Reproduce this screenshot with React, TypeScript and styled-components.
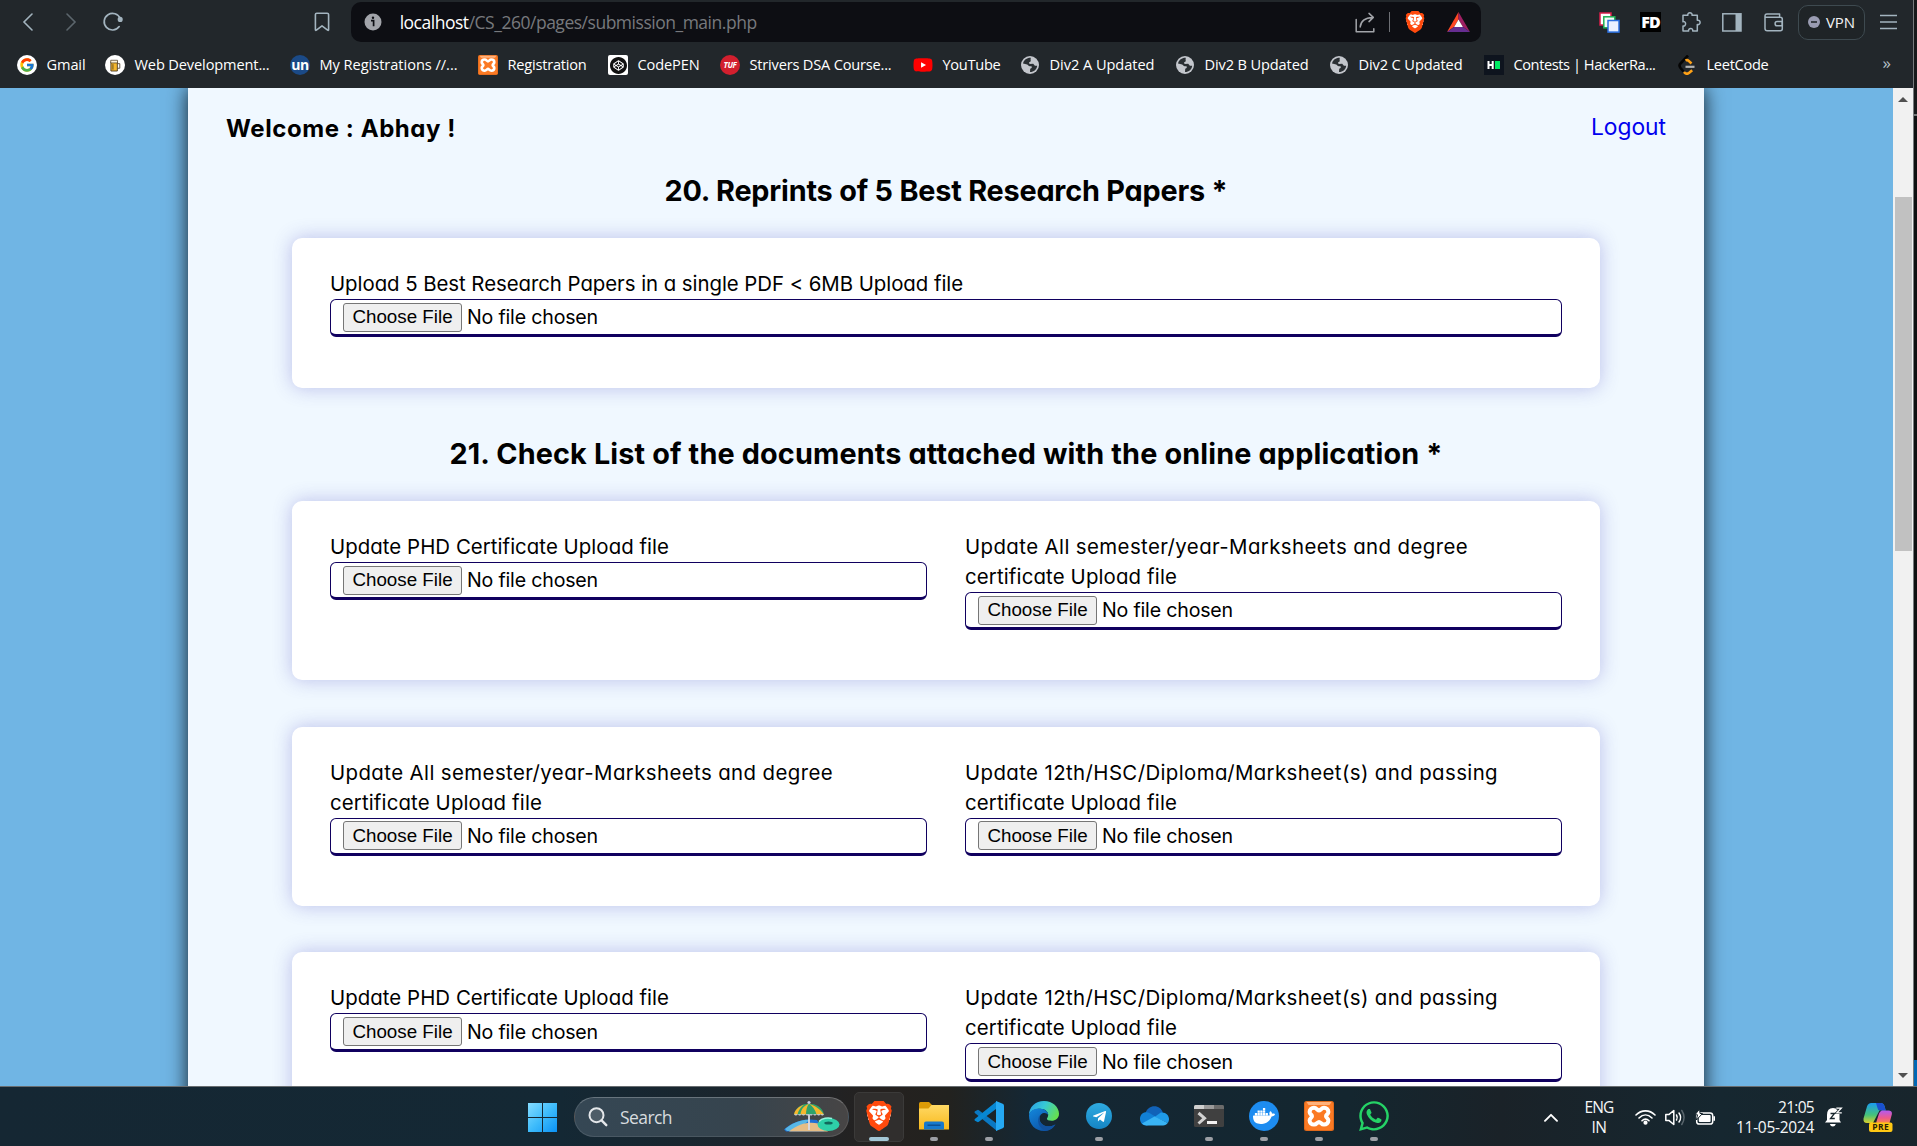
import React, { useLayoutEffect, useRef, useState } from "react";
import styled, { createGlobalStyle } from "styled-components";
import { FcGoogle } from "react-icons/fc";
import { FaYoutube, FaWhatsapp, FaTelegramPlane } from "react-icons/fa";
import { SiBrave, SiCodepen, SiDocker } from "react-icons/si";

const GlobalStyle = createGlobalStyle`
  *, *::before, *::after { box-sizing: border-box; }
  html, body { margin: 0; padding: 0; overflow: hidden; }
  body { font-family: "Open Sans", "Noto Sans", sans-serif; }
  svg { display: block; flex: none; }
`;

/* ---------- text with a fixed measure ---------- */

const FitSpan = styled.span<{ $block?: boolean }>`
  display: ${(p) => (p.$block ? "block" : "inline-block")};
  width: max-content;
  white-space: nowrap;
`;

function Fit({ width, block, children }: { width: number; block?: boolean; children: string }) {
  const ref = useRef<HTMLSpanElement>(null);
  const [spacing, setSpacing] = useState(0);
  useLayoutEffect(() => {
    if (ref.current) {
      const natural = ref.current.getBoundingClientRect().width;
      setSpacing((width - natural) / children.length);
    }
  }, [width, children]);
  return (
    <FitSpan ref={ref} $block={block} style={{ letterSpacing: `${spacing}px` }}>
      {children}
    </FitSpan>
  );
}

/* ---------- frame ---------- */

const Screen = styled.div`
  width: 1917px;
  height: 1146px;
  display: flex;
  flex-direction: column;
  overflow: hidden;
  background: #111315;
`;
const Upper = styled.div`
  display: flex;
  height: 1086px;
`;
const BrowserWindow = styled.div`
  width: 1913px;
  display: flex;
  flex-direction: column;
  background: #22272b;
`;
const DesktopEdge = styled.div`
  width: 4px;
  border-left: 1px solid #777a7c;
  background: linear-gradient(#17191a 0 114px, #75787a 114px 116px, #0e1011 116px 1060px, #0067b4 1060px);
`;

/* ---------- toolbar ---------- */

const Toolbar = styled.header`
  height: 44px;
  display: flex;
  align-items: center;
  padding-left: 6px;
  color: #a3b4bf;
`;
const ToolButton = styled.button<{ $w?: number; $dim?: boolean }>`
  width: ${(p) => p.$w ?? 40.6}px;
  height: 40px;
  padding: 0;
  border: 0;
  background: none;
  display: flex;
  align-items: center;
  justify-content: center;
  color: ${(p) => (p.$dim ? "#5c666d" : "#a3b4bf")};
`;
const BookmarkSlot = styled.div`
  flex: 1;
  display: flex;
  justify-content: flex-end;
`;
const AddressBar = styled.div`
  width: 1130px;
  height: 40px;
  border-radius: 10px;
  background: #0d0e13;
  display: flex;
  align-items: center;
  padding: 0 0 0 13px;
`;
const Url = styled.div`
  flex: 1;
  display: flex;
  margin-left: 18px;
  padding-bottom: 1px;
  font-size: 17.5px;
  line-height: 24px;
  color: #77797d;
`;
const Host = styled.span`
  color: #fff;
`;
const BarActions = styled.div`
  display: flex;
  align-items: center;
  padding-right: 10.5px;
`;
const Divider = styled.i`
  width: 1px;
  height: 20px;
  margin: 0 14px 0 13px;
  background: #6d6f74;
`;
const BraveMark = styled.span<{ $size: number }>`
  display: flex;
  margin-right: ${(p) => (p.$size < 30 ? 21 : 0)}px;
  color: #ff4a0d;
  font-size: ${(p) => p.$size}px;
  background: radial-gradient(circle at 50% 46%, #fff 0 52%, transparent 53%);
`;
const Extensions = styled.div`
  display: flex;
  align-items: center;
  margin: 0 2px 0 109px;
`;
const FdBadge = styled.span`
  width: 21px;
  height: 20px;
  background: #000;
  color: #fff;
  font: 800 16px/20px "Open Sans", sans-serif;
  letter-spacing: -1px;
  text-align: center;
`;
const VpnButton = styled.button`
  width: 67px;
  height: 35px;
  margin-left: 2px;
  padding: 0 9px 0 9px;
  border: 1px solid #3e4a50;
  border-radius: 10px;
  background: #1f2427;
  display: flex;
  align-items: center;
  justify-content: space-between;
  color: #f2f2f4;
  font: 15px "Open Sans", sans-serif;
`;

/* ---------- bookmarks ---------- */

const BookmarkBar = styled.nav`
  height: 44px;
  display: flex;
  align-items: center;
  padding: 0 0 2px 17px;
  color: #fff;
  font-size: 14.6px;
  line-height: 20px;
`;
const BookmarkItem = styled.a<{ $w: number }>`
  width: ${(p) => p.$w}px;
  flex: none;
  display: flex;
  align-items: center;
  gap: 9.5px;

  > :last-child {
    margin-top: -2px;
  }
`;
const Favicon = styled.span<{ $bg?: string; $fg?: string; $r?: string; $fs?: number }>`
  width: 20px;
  height: 20px;
  flex: none;
  display: flex;
  align-items: center;
  justify-content: center;
  overflow: hidden;
  border-radius: ${(p) => p.$r ?? "0"};
  background: ${(p) => p.$bg ?? "none"};
  color: ${(p) => p.$fg ?? "#fff"};
  font-size: ${(p) => p.$fs ?? 12}px;
  font-weight: 700;
  letter-spacing: -0.4px;
`;
const Overflow = styled.span`
  margin: -4px 22px 0 auto;
  color: #b6c0c8;
  font-size: 17px;
`;

/* ---------- page ---------- */

const Viewport = styled.div`
  height: 998px;
  display: flex;
  background: #70b5e4;
`;
const Canvas = styled.main`
  flex: 1;
  overflow: hidden;
  padding: 0 189px 0 188px;
`;
const Sheet = styled.section`
  min-height: 1100px;
  background: #f0f8ff;
  box-shadow: 0 0 19px rgba(0, 0, 0, 0.85);
  color: #000;
  font-family: Inter, "Open Sans", sans-serif;
  font-feature-settings: "cv11", "ss03";
`;
const SheetHeader = styled.div`
  display: flex;
  justify-content: space-between;
  height: 81px;
  padding: 23px 38px 0 38px;
`;
const Welcome = styled.h2`
  margin: 0;
  font-size: 24px;
  line-height: 36px;
  font-weight: 700;
`;
const Logout = styled.a`
  font-size: 22.8px;
  line-height: 32px;
  font-weight: 375;
  color: #0000ee;
`;
const Heading = styled.h1<{ $gap?: number }>`
  margin: ${(p) => p.$gap ?? 0}px 0 25px;
  display: flex;
  justify-content: center;
  font-size: 28.8px;
  line-height: 44px;
  font-weight: 700;
`;
const CardStack = styled.div`
  display: flex;
  flex-direction: column;
  gap: 46.5px;
  padding: 0 104px;
`;
const Card = styled.div<{ $h: number }>`
  height: ${(p) => p.$h}px;
  padding: 31px 38px 0;
  display: flex;
  align-items: flex-start;
  gap: 38px;
  border-radius: 10px;
  background: #fff;
  box-shadow: 0 0 19px rgba(70, 70, 190, 0.32);
`;
const Field = styled.label`
  flex: 1;
  display: flex;
  flex-direction: column;
  font-size: 20.4px;
  line-height: 30px;
  font-weight: 375;
`;
const FileInput = styled.div`
  height: 38.3px;
  display: flex;
  align-items: center;
  gap: 5px;
  padding: 0 12px;
  border: 1px solid #10005f;
  border-bottom-width: 3px;
  border-radius: 6px;
  background: #fff;
  font-size: 19.6px;
`;
const ChooseButton = styled.span`
  width: 119px;
  height: 29px;
  display: flex;
  align-items: center;
  justify-content: center;
  border: 1px solid #767676;
  border-radius: 3px;
  background: #efefef;
  font: 18.8px/26px "Liberation Sans", Arial, sans-serif;
`;
const ScrollTrack = styled.div`
  width: 20px;
  display: flex;
  flex-direction: column;
  align-items: center;
  background: #f1f1f1;
`;
const ScrollArrow = styled.i<{ $down?: boolean }>`
  width: 0;
  height: 0;
  margin: ${(p) => (p.$down ? "auto 0 8px" : "9px 0 0")};
  border: 5px solid transparent;
  border-width: ${(p) => (p.$down ? "5px 5px 0" : "0 5px 5px")};
  border-top-color: ${(p) => (p.$down ? "#505050" : "transparent")};
  border-bottom-color: ${(p) => (p.$down ? "transparent" : "#505050")};
`;
const ScrollThumb = styled.i`
  width: 17px;
  height: 354px;
  margin-top: 95px;
  background: #c1c1c1;
`;

/* ---------- taskbar ---------- */

const Taskbar = styled.footer`
  height: 60px;
  flex: none;
  display: flex;
  align-items: center;
  padding: 1px 24px 0 515px;
  border-top: 1px solid #686d70;
  background: linear-gradient(90deg, #152733 0, #142834 560px, #1b252d 740px, #25211f 880px, #22221f 950px, #142734 1030px, #14262f 1350px, #1a2228 1500px, #162730 1720px, #18252c 1917px);
  color: #f4f6f7;
`;
const StartButton = styled.div`
  width: 59px;
  padding-left: 13px;
`;
const SearchPill = styled.div`
  width: 275px;
  height: 40px;
  display: flex;
  align-items: center;
  padding: 0 8px 0 13px;
  border: 1px solid rgba(255, 255, 255, 0.1);
  border-top-color: rgba(255, 255, 255, 0.25);
  border-radius: 20px;
  background: linear-gradient(90deg, #354754, #36444e 60%, #474545);
  font-size: 17.5px;
  color: #d8dcdf;
`;
const SearchText = styled.span`
  flex: 1;
  margin-left: 12px;
`;
const Apps = styled.div`
  display: flex;
  margin-left: 2.5px;
`;
const AppCell = styled.div`
  width: 55px;
  height: 50px;
  display: flex;
  justify-content: center;
`;
const AppTile = styled.div<{ $active?: boolean }>`
  width: 50px;
  height: 50px;
  display: flex;
  flex-direction: column;
  align-items: center;
  justify-content: space-between;
  padding: ${(p) => (p.$active ? "8px 0 0" : "9px 0 1px")};
  border: ${(p) => (p.$active ? "1px solid #3b3a39" : "0")};
  border-radius: 5px;
  background: ${(p) => (p.$active ? "#302e2d" : "none")};
`;
const AppIcon = styled.div`
  height: 30px;
  display: flex;
  align-items: center;
  justify-content: center;
`;
const Indicator = styled.i<{ $kind: "none" | "dot" | "bar" }>`
  width: ${(p) => (p.$kind === "bar" ? 20 : 8)}px;
  height: 4px;
  border-radius: 2px;
  background: ${(p) => (p.$kind === "bar" ? "#a3c7d6" : p.$kind === "dot" ? "#9c9fa5" : "transparent")};
`;
const RoundTile = styled.span<{ $size: number; $bg: string; $fs: number }>`
  width: ${(p) => p.$size}px;
  height: ${(p) => p.$size}px;
  display: flex;
  align-items: center;
  justify-content: center;
  border-radius: 50%;
  background: ${(p) => p.$bg};
  color: #fff;
  font-size: ${(p) => p.$fs}px;
`;
const Tray = styled.div`
  margin-left: auto;
  display: flex;
  align-items: center;
  font-size: 15.5px;
  line-height: 20px;
`;
const TrayGroup = styled.div<{ $gap: number; $ml: number }>`
  display: flex;
  align-items: center;
  gap: ${(p) => p.$gap}px;
  margin-left: ${(p) => p.$ml}px;
`;
const TrayLines = styled.div<{ $align: "center" | "flex-end"; $ml: number; $w: number }>`
  width: ${(p) => p.$w}px;
  margin-left: ${(p) => p.$ml}px;
  padding-bottom: 1px;
  display: flex;
  flex-direction: column;
  align-items: ${(p) => p.$align};
`;

/* ---------- icons ---------- */

const Chevron = ({ flip }: { flip?: boolean }) => (
  <svg width="12" height="20" viewBox="0 0 12 20" fill="none" stroke="currentColor" strokeWidth="1.6" strokeLinecap="round">
    <path d={flip ? "M2 2l8 8-8 8" : "M10 2l-8 8 8 8"} />
  </svg>
);
const Reload = () => (
  <svg width="22" height="22" viewBox="0 0 22 22" fill="none" stroke="currentColor" strokeWidth="1.7" strokeLinecap="round">
    <path d="M17.2 15.6A8.3 8.3 0 1 1 18.2 7.6" />
    <circle cx="18.2" cy="8.4" r="1.7" fill="currentColor" />
  </svg>
);
const BookmarkIcon = () => (
  <svg width="16" height="20" viewBox="0 0 16 20" fill="none" stroke="currentColor" strokeWidth="1.6" strokeLinejoin="round">
    <path d="M1.4 2.6Q1.4 1.2 2.8 1.2h10.4q1.4 0 1.4 1.4v15q0 1.2-1 .5L8 13.9l-5.6 4.2q-1 .7-1-.5z" />
  </svg>
);
const InfoIcon = () => (
  <svg width="18" height="18" viewBox="0 0 18 18">
    <circle cx="9" cy="9" r="8.5" fill="#a2a4aa" />
    <path d="M7 7.6h2.6v5.6" stroke="#0d0e13" strokeWidth="1.7" fill="none" />
    <circle cx="9" cy="4.7" r="1.2" fill="#0d0e13" />
  </svg>
);
const ShareIcon = () => (
  <svg width="21" height="21" viewBox="0 0 21 21" fill="none" stroke="#a2a4a9" strokeWidth="1.5" strokeLinejoin="round" strokeLinecap="round">
    <path d="M1.2 7.5v12.2h17.6v-3" />
    <path d="M5.2 15c.4-5.6 4-9.2 12.6-9.6M14 1.4l4.3 4-4.3 4.2" />
  </svg>
);
const BatIcon = () => (
  <svg width="23" height="20" viewBox="0 0 23 20">
    <path d="M11.5 0L0 20l7.2-5.2 4.3-7.3z" fill="#ff4724" />
    <path d="M11.5 0L23 20l-7.2-5.2-4.3-7.3z" fill="#9e1f63" />
    <path d="M0 20h23l-7.2-5.2H7.2z" fill="#662d91" />
    <path d="M11.5 7.5l4.4 7.4H7.1z" fill="#fff" />
  </svg>
);
const StackIcon = () => (
  <svg width="21" height="21" viewBox="0 0 21 21" strokeWidth="1.5">
    <rect x="1" y="1" width="11" height="12" fill="#fff" stroke="#d91e4a" />
    <rect x="4.8" y="4.8" width="11" height="11" fill="#f3fff5" stroke="#1fae55" />
    <rect x="9" y="8.5" width="11" height="11.6" fill="#e9f1ff" stroke="#2a6fe0" />
  </svg>
);
const PuzzleIcon = () => (
  <svg width="20" height="20" viewBox="0 0 20 20" fill="none" stroke="currentColor" strokeWidth="1.5" strokeLinejoin="round">
    <path d="M2 3.3h4.9C6.4 1.9 7.5.8 8.9.8s2.6 1.1 2.1 2.5h5.3v5c1.5-.5 2.8.6 2.8 2.1s-1.3 2.6-2.8 2.1v6.6h-4.6c.4-1.6-.6-2.7-2-2.7s-2.5 1.1-2.1 2.7H2v-5.2c1.5.4 2.6-.6 2.6-2.1S3.5 9.3 2 9.7z" />
  </svg>
);
const SidebarIcon = () => (
  <svg width="20" height="19" viewBox="0 0 20 19">
    <rect x=".8" y=".8" width="18.2" height="17.2" fill="none" stroke="currentColor" strokeWidth="1.5" />
    <path d="M13.5 1h5.5v17h-5.500z" fill="currentColor" />
  </svg>
);
const WalletIcon = () => (
  <svg width="20" height="19" viewBox="0 0 20 19" fill="none" stroke="currentColor" strokeWidth="1.5" strokeLinejoin="round">
    <path d="M1 3.200Q1 1 3 1h12.600v3.200M1 3v12.500q0 2.300 2.300 2.300h13q2 0 2-2V6.300q0-2-2-2H2.500Q1 4.200 1 3z" />
    <path d="M18.300 8.600h-5.200q-2 0-2 2.100t2 2.100h5.200z" />
  </svg>
);
const MenuIcon = () => (
  <svg width="17" height="16" viewBox="0 0 17 16" stroke="currentColor" strokeWidth="1.4">
    <path d="M0 1.500h17M0 8h17M0 14.500h17" />
  </svg>
);
const GlobeIcon = () => (
  <svg width="18" height="18" viewBox="0 0 18 18">
    <circle cx="9" cy="9" r="9" fill="#c3c6cc" />
    <path d="M9.800 1.800C6 1.600 2.800 4 2 7.400l4.200 1.200c1 .3 1.200 1.700 2.600 1.700h1.400c.9.300.8 1.500 0 1.900l-1 .6-.2 3.200c4 0 6.900-2.600 7.200-6.300l-2.300.1-1.700-2-3.600.1-.6-1.500 1.800-1.200-.2-1.600z" fill="#2a2f33" />
  </svg>
);
const BeerIcon = () => (
  <svg width="11" height="13" viewBox="0 0 12 14">
    <path d="M1 3h7v10H1z" fill="#f5b82e" stroke="#4b3a20" />
    <path d="M.8 1.300h7.400v2.900H.8z" fill="#fff4da" stroke="#4b3a20" strokeWidth=".8" />
    <path d="M8.300 5h2.400v5H8.300M3.200 5.500v6" fill="none" stroke="#4b3a20" strokeWidth=".9" />
  </svg>
);
const XamppIcon = ({ size }: { size: number }) => (
  <svg width={size} height={size} viewBox="0 0 30 30">
    <rect width="30" height="30" rx="2.500" fill="#e06a1c" />
    <rect x="1" y="1" width="28" height="28" rx="2" fill="#fb7a24" />
    <path d="M2.500 1h25l-2 3h-21z" fill="#ffb27c" />
    <path
      d="M10 6.800c2.600 0 3.500 2.700 5 2.700s2.400-2.700 5-2.700c2.500 0 4.400 1.700 4.400 4.100 0 2.300-2.400 2.800-2.400 4.300s2.400 2 2.400 4.300c0 2.400-1.900 4.100-4.400 4.100-2.600 0-3.500-2.700-5-2.700s-2.400 2.700-5 2.700c-2.500 0-4.400-1.700-4.400-4.100 0-2.300 2.400-2.800 2.400-4.300s-2.400-2-2.400-4.300c0-2.400 1.900-4.100 4.400-4.100z"
      fill="none"
      stroke="#fff"
      strokeWidth="4"
      strokeLinejoin="round"
    />
  </svg>
);
const LeetMark = () => (
  <svg width="18" height="20" viewBox="0 0 18 20" fill="none" strokeWidth="2.600">
    <path d="M10 .5L2.500 8.500q-2 2 0 4.500L5.500 16.500" stroke="#050505" />
    <path d="M7.500 5.500q1.700-1 3.200.4l2.800 2.600M6 17q2.500 3 5.200.8l3-2.600" stroke="#ffa116" />
    <path d="M7.500 11.800h9" stroke="#b3b3b3" strokeWidth="2.200" />
  </svg>
);
const HackerRankIcon = () => (
  <svg width="20" height="20" viewBox="0 0 20 20">
    <rect width="20" height="20" fill="#0e141e" />
    <path d="M4.500 6v8M8.700 6v8M4.500 10h4.200" stroke="#fff" strokeWidth="2" />
    <path d="M11 6h5v8h-5z" fill="#00ea64" />
  </svg>
);
const WindowsIcon = () => (
  <svg width="29" height="29" viewBox="0 0 29 29">
    <defs>
      <linearGradient id="win" x1="0" y1="0" x2="1" y2="1">
        <stop offset="0" stopColor="#85dcff" />
        <stop offset=".5" stopColor="#3fbcfb" />
        <stop offset="1" stopColor="#0a92f6" />
      </linearGradient>
    </defs>
    <path d="M0 0h14v14H0zM15 0h14v14H15zM0 15h14v14H0zM15 15h14v14H15z" fill="url(#win)" />
  </svg>
);
const SearchIcon = () => (
  <svg width="20" height="20" viewBox="0 0 20 20" fill="rgba(255,255,255,.12)" stroke="#e4e7ea" strokeWidth="2" strokeLinecap="round">
    <circle cx="8.500" cy="8.200" r="7" />
    <path d="M13.600 13.400l4.700 4.800" strokeWidth="2.400" />
  </svg>
);
const BeachIcon = () => (
  <svg width="56" height="32" viewBox="0 0 56 32">
    <path d="M0 28.500C9 20 22 17 33 19l7 11.500H2z" fill="#1e70d6" />
    <path d="M1 28C9 21 18 18.500 26 18.800L12 30H3z" fill="#58b7e6" />
    <path d="M5 30.500C15 22 26 20.500 34 22.500l10 8z" fill="#e5bd86" />
    <path d="M25 2v27" stroke="#d8dbe6" strokeWidth="1.800" />
    <circle cx="25" cy="1.600" r="1.600" fill="#c7c9e6" />
    <path d="M10 13.500C12 6 18 2.800 25 2.800S38 6 40 13.500z" fill="#2fa36b" />
    <path d="M25 2.800C19 5 17 9 16.500 13.500H22C22 9 23 5 25 2.800zM25 2.800c5 1.500 11 5 15 10.700h-7.500C31.500 9 28.500 5 25 2.800zM20 3.800C14 6 11 9 10 13.500h3.500C14.500 9 17 6 20 3.800z" fill="#f6b62d" />
    <path d="M10 13.300q1.900 2.600 3.800 0 1.900 2.600 3.800 0 1.900 2.600 3.800 0 1.900 2.600 3.800 0 1.900 2.600 3.800 0 1.900 2.600 3.800 0 1.900 2.600 3.800 0 1.700 2.600 3.400 0" fill="#d7d9ea" />
    <ellipse cx="44.500" cy="23.500" rx="11" ry="6.500" fill="#2ed0a8" />
    <ellipse cx="44.500" cy="22" rx="4.200" ry="1.500" fill="#11695c" />
    <path d="M35 20.500c3-3.500 9-4 13-3" stroke="#98f4dd" strokeWidth="1.500" fill="none" />
  </svg>
);
const FolderIcon = () => (
  <svg width="30" height="28" viewBox="0 0 30 28">
    <defs>
      <linearGradient id="fold" x1="0" y1="0" x2="0" y2="1">
        <stop offset="0" stopColor="#ffd965" />
        <stop offset="1" stopColor="#f8b91c" />
      </linearGradient>
    </defs>
    <path d="M0 1.500Q0 0 1.500 0H10l3.500 3.500V9H0z" fill="#dc9b07" />
    <path d="M0 6.500h9.500l3-3.500H30v24.500H0z" fill="url(#fold)" />
    <path d="M5 27.500v-6Q5 19.500 7 19.500h16q2 0 2 2v6z" fill="#1679cd" />
    <path d="M8.500 23.200h13" stroke="#0b4a8a" strokeWidth="1.300" />
  </svg>
);
const VsCodeIcon = () => (
  <svg width="30" height="30" viewBox="0 0 30 30">
    <path d="M1 10.200l2.500-1.300q.8-.2 1.400.3L23 22.800V30L.8 12q-.8-1 .2-1.800z" fill="#0a78c2" />
    <path d="M1 19.800l2.500 1.300q.8.2 1.400-.3L23 7.200V0L.8 18q-.8 1 .2 1.800z" fill="#0787d3" />
    <path d="M22 0l6.700 2.800q1.300.7 1.300 2v20.400q0 1.300-1.300 2L22 30z" fill="#25a9f3" />
  </svg>
);
const EdgeIcon = () => (
  <svg width="30" height="30" viewBox="0 0 30 30">
    <defs>
      <linearGradient id="edgeTop" x1="0" y1=".2" x2="1" y2=".6">
        <stop offset="0" stopColor="#2b9fe5" />
        <stop offset=".45" stopColor="#36c9d6" />
        <stop offset="1" stopColor="#66e04e" />
      </linearGradient>
      <linearGradient id="edgeLow" x1="0" y1="0" x2=".8" y2="1">
        <stop offset="0" stopColor="#1387dc" />
        <stop offset="1" stopColor="#0c4ea0" />
      </linearGradient>
    </defs>
    <path d="M0 14C0 6 6.500 0 15 0s15 6 15 12.800c0 4.700-3.700 7-7.300 7-3.200 0-4.800-1-4.800-2 0-.8 1.300-1.500 1.300-4 0-3.300-3.500-6.100-8-6.100C5.500 7.700 1 10 0 14z" fill="url(#edgeTop)" />
    <path d="M0 14.500c.4-4 4.400-6.900 9.700-6.900 5.800 0 9.300 3 9.500 6.300-.9-1.600-2.800-2.300-4.600-1.900-3 .7-4.600 3.500-3.900 7 1 4.700 6 7 10.600 6.200 2-.3 3.800-1.100 5.200-2-2.500 4.500-6.900 6.800-11.500 6.800C6.500 30 0 23.500 0 14.500z" fill="url(#edgeLow)" />
    <path d="M11 14c-4 5-1.500 13.500 6 15.900 4-.5 7.500-3 9.500-6.700-1.500.9-3.200 1.800-5.200 2-5 .7-10.300-2-10.900-7z" fill="#11519d" />
  </svg>
);
const CloudIcon = () => (
  <svg width="29" height="20" viewBox="0 0 29 20">
    <path d="M6.500 18.500A6 6 0 0 1 5.500 7C7 2.700 10.500.3 14.300.3c4.200 0 7.300 2.400 8.500 6.200l-8 8z" fill="#1162b8" />
    <path d="M0 13A6.400 6.400 0 0 1 9 6.800l15 9-17.500 3.700C2.800 19.500 0 16.700 0 13z" fill="#1180d6" />
    <path d="M14.500 11l6.300-4.500c4.700-.8 8.200 2.600 8.200 6.600 0 1.500-.5 3-1.300 4z" fill="#1f9ae8" />
    <path d="M2 17.500l12.500-7 13.200 6.500c-1 1.600-2.600 2.500-4.600 2.500H6.500c-1.900 0-3.400-.8-4.500-2z" fill="#39b4f5" />
  </svg>
);
const TerminalIcon = () => (
  <svg width="30" height="22" viewBox="0 0 30 22">
    <rect width="30" height="22" rx="1.500" fill="#404040" />
    <path d="M0 4V1.500Q0 0 1.500 0H10v4z" fill="#cfcfcf" />
    <path d="M10 0h10v4H10z" fill="#9a9a9a" />
    <path d="M20 0h8.500Q30 0 30 1.500V4H20z" fill="#6b6b6b" />
    <path d="M4.500 8l6 5.200-6 5.300" fill="none" stroke="#d2d2d2" strokeWidth="3" />
    <path d="M13 17.500h10" stroke="#f2f2f2" strokeWidth="3" />
  </svg>
);
const UpChevron = () => (
  <svg width="14" height="9" viewBox="0 0 14 9" fill="none" stroke="#fff" strokeWidth="1.900" strokeLinecap="round" strokeLinejoin="round">
    <path d="M1 7.800l6-6 6 6" />
  </svg>
);
const WifiIcon = () => (
  <svg width="21" height="16" viewBox="0 0 21 16" fill="none" stroke="#fff" strokeWidth="1.600" strokeLinecap="round">
    <path d="M1 6c5.500-5.500 13.500-5.500 19 0M4 9c4-4 9-4 13 0M7 11.800c2.200-2.200 4.800-2.200 7 0" />
    <circle cx="10.500" cy="13.700" r="1.300" fill="#fff" />
  </svg>
);
const SpeakerIcon = () => (
  <svg width="21" height="17" viewBox="0 0 21 17" fill="none" stroke="#fff" strokeWidth="1.500" strokeLinejoin="round" strokeLinecap="round">
    <path d="M.8 5.600h3L8.800 1.500v14L3.800 11.400h-3z" />
    <path d="M11.500 6q1.500 2.500 0 5M14 4q3.200 4.500 0 9" />
    <path d="M16.800 1.500q4.500 7 0 14" stroke="#59656c" />
  </svg>
);
const BatteryIcon = () => (
  <svg width="21" height="17" viewBox="0 0 21 17">
    <rect x="1.700" y="4" width="16" height="11" rx="2.600" fill="none" stroke="#fff" strokeWidth="1.500" />
    <rect x="3.800" y="6" width="11.800" height="7" rx="1" fill="#fff" />
    <path d="M18.400 7.300h1.600v4.400h-1.600z" fill="#fff" />
    <path d="M4.600 0L0 5.800h2.500L1.400 11 7.500 4.500H5z" fill="#fff" stroke="#17252d" strokeWidth="1" />
  </svg>
);
const BellIcon = () => (
  <svg width="18" height="20" viewBox="0 0 18 20">
    <path d="M2 8Q2 1 8 1t6.500 6.500V13l1.500 2.500H0L2 13z" fill="#fff" />
    <path d="M4.800 17h6q-.8 2.500-3 2.500T4.800 17z" fill="#fff" />
    <path d="M5.500 6.500h4l-4 5h4.300" fill="none" stroke="#17252d" strokeWidth="1.300" />
    <path d="M11.300 1.200h5l-4.400 4.600h4.900" fill="none" stroke="#17252d" strokeWidth="2.600" />
    <path d="M11.300 1.200h5l-4.400 4.600h4.900" fill="none" stroke="#fff" strokeWidth="1.300" />
  </svg>
);
const CopilotIcon = () => (
  <svg width="30" height="29" viewBox="0 0 30 29">
    <defs>
      <linearGradient id="cpL" x1="0" y1="0" x2="0" y2="1">
        <stop offset="0" stopColor="#1a9bf0" />
        <stop offset=".6" stopColor="#45c27a" />
        <stop offset="1" stopColor="#d9cf2c" />
      </linearGradient>
      <linearGradient id="cpR" x1="0" y1="0" x2="0" y2="1">
        <stop offset="0" stopColor="#b45af0" />
        <stop offset=".6" stopColor="#ee5a8a" />
        <stop offset="1" stopColor="#f98a4a" />
      </linearGradient>
    </defs>
    <path d="M8.500 0h9q3 0 4 3l1.200 4.500h-5.500L13 20H4Q0 20 .5 15.500L4 3.500Q5 0 8.500 0z" fill="url(#cpL)" />
    <path d="M13 0h4.500q3 0 4 3l1.200 4.500h-6Q15 7.500 14.500 5z" fill="#1a50cf" />
    <path d="M19 7.500h7q3.600.5 2.800 4L26.500 20H15l-3-.5 3-9.500q.8-2.500 4-2.500z" fill="url(#cpR)" />
    <path d="M16.500 7.500h2.300q-2 .8-2.800 3L13 20h-3z" fill="#17252d" />
    <rect x="6" y="19.500" width="23.500" height="9.500" rx="2" fill="#ffc814" />
    <text x="17.800" y="27.300" textAnchor="middle" fontFamily="Open Sans, sans-serif" fontWeight="700" fontSize="8.500" letterSpacing=".4" fill="#2b2205">PRE</text>
  </svg>
);

/* ---------- data ---------- */

type Bookmark = { label: string; slot: number; text: number; icon: React.ReactNode };

const globe = <Favicon><GlobeIcon /></Favicon>;

const bookmarks: Bookmark[] = [
  { label: "Gmail", slot: 88, text: 39, icon: <Favicon $bg="#fff" $r="50%" $fs={16}><FcGoogle /></Favicon> },
  { label: "Web Development...", slot: 185, text: 135, icon: <Favicon $bg="#fff" $r="50%"><BeerIcon /></Favicon> },
  { label: "My Registrations //...", slot: 188, text: 138, icon: <Favicon $bg="#1b4a87" $r="50%" $fs={14}>un</Favicon> },
  { label: "Registration", slot: 130, text: 79, icon: <Favicon><XamppIcon size={20} /></Favicon> },
  { label: "CodePEN", slot: 112, text: 62, icon: <Favicon $bg="#fff" $fg="#111" $r="2px" $fs={17}><SiCodepen /></Favicon> },
  { label: "Strivers DSA Course...", slot: 193, text: 142, icon: <Favicon $bg="#d21f2e" $r="50%" $fs={8}><em>TUF</em></Favicon> },
  { label: "YouTube", slot: 107, text: 58, icon: <Favicon $fg="#f00" $r="5px" $bg="radial-gradient(circle, #fff 0 4px, transparent 5px)" $fs={20}><FaYoutube /></Favicon> },
  { label: "Div2 A Updated", slot: 155, text: 105, icon: globe },
  { label: "Div2 B Updated", slot: 154, text: 104, icon: globe },
  { label: "Div2 C Updated", slot: 155, text: 104, icon: globe },
  { label: "Contests | HackerRa...", slot: 193, text: 142, icon: <Favicon><HackerRankIcon /></Favicon> },
  { label: "LeetCode", slot: 100, text: 62, icon: <Favicon><LeetMark /></Favicon> },
];

type Line = [string, number];

const DEGREE: Line[] = [["Update All semester/year-Marksheets and degree", 503], ["certificate Upload file", 212]];
const DIPLOMA: Line[] = [["Update 12th/HSC/Diploma/Marksheet(s) and passing", 533], ["certificate Upload file", 212]];
const PHD: Line[] = [["Update PHD Certificate Upload file", 339]];
const PAPERS: Line[] = [["Upload 5 Best Research Papers in a single PDF < 6MB Upload file", 633]];

const checklist: Line[][][] = [
  [PHD, DEGREE],
  [DEGREE, DIPLOMA],
  [PHD, DIPLOMA],
];

function FileField({ lines }: { lines: Line[] }) {
  return (
    <Field>
      {lines.map(([text, width]) => (
        <Fit key={text} width={width} block>{text}</Fit>
      ))}
      <FileInput>
        <ChooseButton>Choose File</ChooseButton>
        <Fit width={131}>No file chosen</Fit>
      </FileInput>
    </Field>
  );
}

const apps: { name: string; kind: "none" | "dot" | "bar"; icon: React.ReactNode }[] = [
  { name: "brave", kind: "bar", icon: <BraveMark $size={30}><SiBrave /></BraveMark> },
  { name: "files", kind: "dot", icon: <FolderIcon /> },
  { name: "code", kind: "dot", icon: <VsCodeIcon /> },
  { name: "edge", kind: "none", icon: <EdgeIcon /> },
  { name: "telegram", kind: "dot", icon: <RoundTile $size={26} $bg="linear-gradient(#2fabe1, #1585c4)" $fs={15}><FaTelegramPlane /></RoundTile> },
  { name: "onedrive", kind: "none", icon: <CloudIcon /> },
  { name: "terminal", kind: "dot", icon: <TerminalIcon /> },
  { name: "docker", kind: "dot", icon: <RoundTile $size={30} $bg="#1d8cf0" $fs={22}><SiDocker /></RoundTile> },
  { name: "xampp", kind: "dot", icon: <XamppIcon size={30} /> },
  { name: "whatsapp", kind: "dot", icon: <FaWhatsapp size={34} color="#25d366" /> },
];

export default function App() {
  return (
    <>
      <GlobalStyle />
      <Screen>
        <Upper>
          <BrowserWindow>
            <Toolbar>
              <ToolButton $w={43}><Chevron /></ToolButton>
              <ToolButton $w={43} $dim><Chevron flip /></ToolButton>
              <ToolButton $w={42}><Reload /></ToolButton>
              <BookmarkSlot><ToolButton $w={57}><BookmarkIcon /></ToolButton></BookmarkSlot>
              <AddressBar>
                <InfoIcon />
                <Url>
                  <Host><Fit width={69}>localhost</Fit></Host>
                  <Fit width={288}>/CS_260/pages/submission_main.php</Fit>
                </Url>
                <BarActions>
                  <ShareIcon />
                  <Divider />
                  <BraveMark $size={22}><SiBrave /></BraveMark>
                  <ToolButton $w={23}><BatIcon /></ToolButton>
                </BarActions>
              </AddressBar>
              <Extensions>
                <ToolButton><StackIcon /></ToolButton>
                <ToolButton><FdBadge>FD</FdBadge></ToolButton>
                <ToolButton><PuzzleIcon /></ToolButton>
                <ToolButton><SidebarIcon /></ToolButton>
                <ToolButton $w={44}><WalletIcon /></ToolButton>
                <VpnButton>
                  <svg width="12" height="12" viewBox="0 0 12 12">
                    <circle cx="6" cy="6" r="6" fill="#9a9cb2" />
                    <path d="M3 6h6" stroke="#22272b" strokeWidth="1.600" />
                  </svg>
                  <Fit width={29}>VPN</Fit>
                </VpnButton>
                <ToolButton $w={46}><MenuIcon /></ToolButton>
              </Extensions>
            </Toolbar>
            <BookmarkBar>
              {bookmarks.map((b) => (
                <BookmarkItem key={b.label} $w={b.slot}>
                  {b.icon}
                  <Fit width={b.text}>{b.label}</Fit>
                </BookmarkItem>
              ))}
              <Overflow>»</Overflow>
            </BookmarkBar>
            <Viewport>
              <Canvas>
                <Sheet>
                  <SheetHeader>
                    <Welcome><Fit width={230}>Welcome : Abhay !</Fit></Welcome>
                    <Logout><Fit width={75}>Logout</Fit></Logout>
                  </SheetHeader>
                  <Heading><Fit width={563}>20. Reprints of 5 Best Research Papers *</Fit></Heading>
                  <CardStack>
                    <Card $h={150}><FileField lines={PAPERS} /></Card>
                  </CardStack>
                  <Heading $gap={44}>
                    <Fit width={993}>21. Check List of the documents attached with the online application *</Fit>
                  </Heading>
                  <CardStack>
                    {checklist.map((pair, i) => (
                      <Card key={i} $h={179.2}>
                        {pair.map((lines, j) => <FileField key={j} lines={lines} />)}
                      </Card>
                    ))}
                  </CardStack>
                </Sheet>
              </Canvas>
              <ScrollTrack>
                <ScrollArrow />
                <ScrollThumb />
                <ScrollArrow $down />
              </ScrollTrack>
            </Viewport>
          </BrowserWindow>
          <DesktopEdge />
        </Upper>
        <Taskbar>
          <StartButton><WindowsIcon /></StartButton>
          <SearchPill>
            <SearchIcon />
            <SearchText><Fit width={52}>Search</Fit></SearchText>
            <BeachIcon />
          </SearchPill>
          <Apps>
            {apps.map((a) => (
              <AppCell key={a.name}>
                <AppTile $active={a.kind === "bar"}>
                  <AppIcon>{a.icon}</AppIcon>
                  <Indicator $kind={a.kind} />
                </AppTile>
              </AppCell>
            ))}
          </Apps>
          <Tray>
            <UpChevron />
            <TrayLines $align="center" $ml={25} $w={32}>
              <Fit width={29}>ENG</Fit>
              <Fit width={15}>IN</Fit>
            </TrayLines>
            <TrayGroup $gap={9} $ml={20}>
              <WifiIcon />
              <SpeakerIcon />
              <BatteryIcon />
            </TrayGroup>
            <TrayLines $align="flex-end" $ml={15} $w={83}>
              <Fit width={36}>21:05</Fit>
              <Fit width={78}>11-05-2024</Fit>
            </TrayLines>
            <TrayGroup $gap={20} $ml={11}>
              <BellIcon />
              <CopilotIcon />
            </TrayGroup>
          </Tray>
        </Taskbar>
      </Screen>
    </>
  );
}
